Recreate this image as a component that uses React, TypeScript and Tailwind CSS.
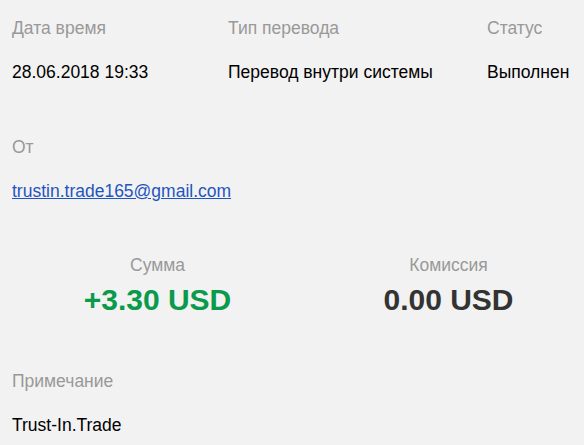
import React from 'react';

export default function App() {
  return (
    <div className="min-h-[445px] bg-[#f2f2f2] px-3 pt-[18px] text-[17.5px] leading-5 text-black" style={{ fontFamily: '"Liberation Sans", Arial, sans-serif' }}>
      <div className="grid grid-cols-[216px_259px_1fr]">
        <div>
          <div className="text-[#999]">Дата время</div>
          <div className="mt-6">28.06.2018 19:33</div>
        </div>
        <div>
          <div className="text-[#999]">Тип перевода</div>
          <div className="mt-6">Перевод внутри системы</div>
        </div>
        <div>
          <div className="text-[#999]">Статус</div>
          <div className="mt-6 whitespace-nowrap">Выполнен</div>
        </div>
      </div>

      <div className="mt-[55px]">
        <div className="text-[#999]">От</div>
        <div className="mt-6">
          <a href="#" className="text-[#1f55c0] underline">trustin.trade165@gmail.com</a>
        </div>
      </div>

      <div className="mt-[54px] grid grid-cols-[291px_291px]">
        <div className="text-center">
          <div className="text-[#999]">Сумма</div>
          <div className="mt-[7px] text-[30px] font-bold leading-9 text-[#0a9a4b]">+3.30 USD</div>
        </div>
        <div className="text-center">
          <div className="text-[#999]">Комиссия</div>
          <div className="mt-[7px] text-[30px] font-bold leading-9 text-[#333]">0.00 USD</div>
        </div>
      </div>

      <div className="mt-[53px]">
        <div className="text-[#999]">Примечание</div>
        <div className="mt-6">Trust-In.Trade</div>
      </div>
    </div>
  );
}
